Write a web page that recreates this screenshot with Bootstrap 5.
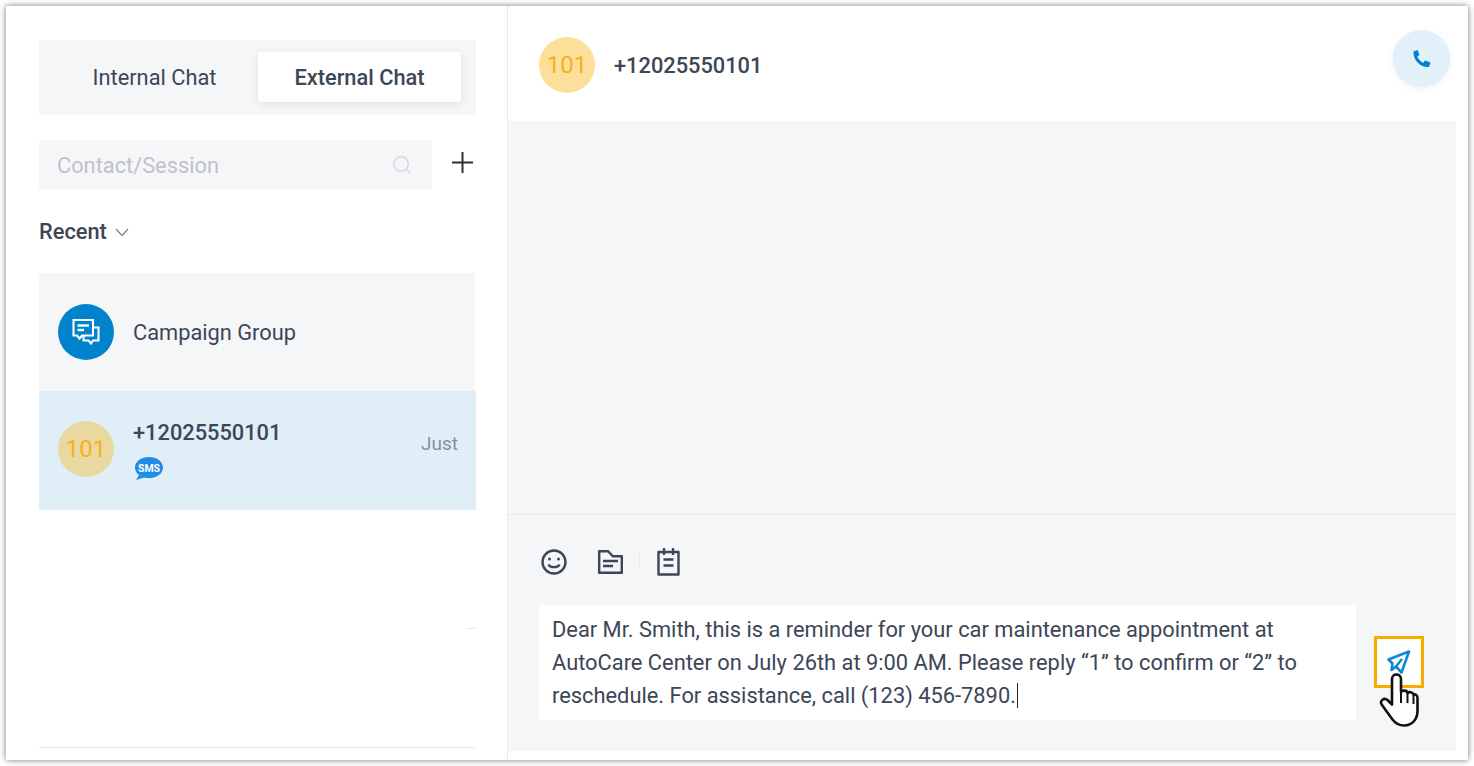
<!DOCTYPE html>
<html lang="en">
<head>
    <meta charset="UTF-8">
    <meta name="viewport" content="width=device-width, initial-scale=1.0">
    <link rel="stylesheet" href="https://cdn.jsdelivr.net/npm/bootstrap@5.3.0/dist/css/bootstrap.min.css">
    <title>External Chat</title>
    <style>
        html, body { height: 100%; }
        body { background: #fff; font-family: Roboto, sans-serif; color: #3c4657; overflow: hidden; padding: 6px 6px 6px 6px; }
        .app-window { height: 754px; width: 1462px; background: #fff; box-shadow: 0 0 6px rgba(0,0,0,.55); }
        .side-panel { width: 502px; flex: none; border-right: 1px solid #e6e9f2; padding: 34px 31px 0 33px; }
        .chat-switch { background: #f5f6f8; height: 75px; padding: 12px 15px 9px 12px; }
        .switch-item { width: 203px; height: 50px; font-size: 21.8px; line-height: 52px; text-align: center; border-radius: 3px; }
        .switch-off { padding-left: 4px; }
        .switch-on { background: #fff; font-weight: 500; box-shadow: 0 2px 8px rgba(60,70,87,.12); width: 203px; }
        .search-row { margin-top: 25px; height: 50px; }
        .search-box { width: 393px; height: 50px; background: #f5f6f8; border-radius: 3px; padding: 0 20px 0 18px; font-size: 21.8px; color: #bfc2c8; }
        .search-label { padding-top: 3px; }
        .plus-btn { margin-left: 20px; margin-top: -6px; }
        .recent-row { margin-top: 28px; height: 26px; font-size: 21.8px; font-weight: 500; line-height: 26px; gap: 8px; padding-top: 2px; }
        .conv-list { margin-top: 29px; width: 437px; }
        .conv-item { padding-left: 19px; gap: 19px; }
        .conv-one { height: 118px; background: #f5f6f8; width: 436px; }
        .conv-two { height: 119px; background: #e0eef8; padding-right: 18px; padding-bottom: 4px; }
        .round-avatar { width: 56px; height: 56px; border-radius: 50%; flex: none; }
        .avatar-blue { background: #0082cc; }
        .avatar-num { background: #e9d8a0; color: #f8b01d; font-size: 24px; }
        .avatar-head { background: #fcdf99; color: #f8b01d; font-size: 24px; }
        .conv-name { font-size: 21.8px; line-height: 26px; padding-top: 1px; }
        .conv-block { padding-top: 4px; }
        .conv-phone { font-size: 21.8px; line-height: 26px; font-weight: 500; }
        .conv-time { font-size: 19px; color: #8a8f98; margin-top: -8px; }
        .sms-ico { display: block; margin-top: 10px; margin-left: 1px; }
        .list-spacer { position: relative; width: 437px; height: 238px; border-bottom: 1px solid #e9eaee; }
        .tiny-rule { position: absolute; right: 0; top: 118px; width: 10px; height: 1px; background: #e6e9f2; }
        .chat-panel { width: 948px; flex: none; }
        .chat-head { height: 115px; padding: 2px 6px 0 31px; gap: 19px; }
        .head-phone { font-size: 21.8px; font-weight: 500; padding-top: 4px; }
        .call-btn { width: 57px; height: 57px; border-radius: 50%; background: #e2f0fa; box-shadow: 0 2px 6px rgba(60,70,87,.08); margin-top: -12px; }
        .msg-area { height: 394px; background: #f5f6f8; border-bottom: 1px solid #e6e9ee; }
        .compose-area { height: 236px; background: #f5f6f8; }
        .tool-row { padding: 33px 0 0 32px; height: 90px; }
        .tool-folder { margin-left: 28px; }
        .tool-sep { width: 1px; height: 19px; background: #e6e9ee; margin: 3px 15px 0 15px; }
        .compose-row { padding-left: 31px; position: relative; }
        .compose-text { width: 817px; height: 115px; background: #fff; padding: 8px 13px; font-size: 21.85px; line-height: 33px; }
        .caret-bar { border-left: 1px solid #222; margin-left: 1px; }
        .send-box { position: absolute; left: 866px; top: 31px; width: 50px; height: 52px; background: #fff; border: 3px solid #f9ab00; }
        .hand-ico { position: absolute; left: 871px; top: 68px; }
        .right-gutter { width: 12px; flex: none; }
    </style>
</head>
<body>
    <div class="app-window d-flex">
        <div class="side-panel">
            <div class="chat-switch d-flex justify-content-between">
                <div class="switch-item switch-off">Internal Chat</div>
                <div class="switch-item switch-on">External Chat</div>
            </div>
            <div class="search-row d-flex">
                <div class="search-box d-flex align-items-center justify-content-between">
                    <span class="search-label">Contact/Session</span>
                    <svg width="20" height="20" viewBox="0 0 20 20" fill="none" stroke="#d5d8de" stroke-width="1.6"><circle cx="9" cy="9" r="7.2"/><path d="M14.2 14.2L18 18"/></svg>
                </div>
                <div class="plus-btn d-flex align-items-center">
                    <svg width="21" height="21" viewBox="0 0 21 21" stroke="#2b2f36" stroke-width="2"><path d="M10.500 0v21M0 10.500h21"/></svg>
                </div>
            </div>
            <div class="recent-row d-flex align-items-center">
                <span>Recent</span>
                <svg width="14" height="9" viewBox="0 0 14 9" fill="none" stroke="#7d828b" stroke-width="1.2"><path d="M1 1l6 6.500L13 1"/></svg>
            </div>
            <div class="conv-list">
                <div class="conv-item conv-one d-flex align-items-center">
                    <div class="round-avatar avatar-blue d-flex align-items-center justify-content-center">
                        <svg width="28" height="28" viewBox="0 0 28 28" fill="none" stroke="#fff" stroke-width="2.100"><path d="M1.500 2h19.500v15.500H10l-2.500 3-2.500-3H1.500z"/><path d="M5.500 7.500h11.500" stroke-width="2.400"/><path d="M5.500 12h6.500" stroke-width="2.400"/><path d="M21 9.500h5.500v13H21l-2 3-2.500-3h-5v-5"/></svg>
                    </div>
                    <div class="conv-name">Campaign Group</div>
                </div>
                <div class="conv-item conv-two d-flex align-items-center">
                    <div class="round-avatar avatar-num d-flex align-items-center justify-content-center">101</div>
                    <div class="conv-block flex-grow-1">
                        <div class="conv-phone">+12025550101</div>
                        <svg class="sms-ico" width="30" height="25" viewBox="0 0 30 25"><path d="M15 1C7 1 1 5.500 1 11.500c0 3 1.500 5.500 4 7.500L2 24l8-2.500c1.500.4 3.200.6 5 .6 8 0 14-4.800 14-10.600S23 1 15 1z" fill="#1f8ce6"/><text x="15" y="15.500" text-anchor="middle" font-family="Roboto, sans-serif" font-size="10.500" font-weight="700" fill="#fff">SMS</text></svg>
                    </div>
                    <div class="conv-time">Just</div>
                </div>
                <div class="list-spacer"><div class="tiny-rule"></div></div>
            </div>
        </div>
        <div class="chat-panel">
            <div class="chat-head d-flex align-items-center">
                <div class="round-avatar avatar-head d-flex align-items-center justify-content-center">101</div>
                <div class="head-phone flex-grow-1">+12025550101</div>
                <div class="call-btn d-flex align-items-center justify-content-center">
                    <svg width="20" height="20" viewBox="0 0 20 20"><path d="M1.500 2.500L5.500 1l2 5-2.200 1.500c1 2.800 3.400 5.200 6.200 6.200L13 11.500l5.500 2-1.500 4.500C8.500 19 1 11 1.500 2.500z" fill="#0082cc"/></svg>
                </div>
            </div>
            <div class="msg-area"></div>
            <div class="compose-area">
                <div class="tool-row d-flex align-items-start">
                    <svg width="28" height="28" viewBox="0 0 28 28" fill="none" stroke="#3c4657" stroke-width="2.400"><circle cx="14" cy="14" r="11.500"/><circle cx="9.500" cy="11" r="1.500" fill="#3c4657" stroke="none"/><circle cx="18.500" cy="11" r="1.500" fill="#3c4657" stroke="none"/><path d="M8.500 16.500c1.500 3.500 9.500 3.500 11 0"/></svg>
                    <svg class="tool-folder" width="28" height="28" viewBox="0 0 28 28" fill="none" stroke="#3c4657" stroke-width="2.400" stroke-linejoin="round"><path d="M3.200 3.200h9l4.500 5h9.100v16.600H3.200z"/><path d="M7 13h15M7 18h10"/></svg>
                    <div class="tool-sep"></div>
                    <svg width="26" height="28" viewBox="0 0 26 28" fill="none" stroke="#3c4657" stroke-width="2.400" stroke-linejoin="round"><path d="M3.500 4h20v22.500h-20z"/><path d="M9 0v7M18 0v7M8.500 11.500h10M8.500 17.500h10"/></svg>
                </div>
                <div class="compose-row">
                    <div class="compose-text">Dear Mr. Smith, this is a reminder for your car maintenance appointment at AutoCare Center on July 26th at 9:00 AM. Please reply “1” to confirm or “2” to reschedule. For assistance, call (123) 456-7890.<span class="caret-bar"></span></div>
                    <div class="send-box d-flex align-items-center justify-content-center">
                        <svg width="26" height="26" viewBox="0 0 26 26" fill="none" stroke="#0a8ad6" stroke-width="2.600" stroke-linejoin="round"><path d="M23 2.500L2.500 10.500l4 4-1 6.500 4.500-3.500 5.500 6z"/><path d="M10 17.500L16 10"/></svg>
                    </div>
                    <svg class="hand-ico" width="42" height="54" viewBox="0 0 42 54"><path d="M13 6c0-6 9-6 9 0v13c1.500-2 6-2 6.500 1 1.500-1.500 5.500-1 6 1.500 2-.5 4 .5 4 3.500v13c0 9-6 14.500-13.500 14.500-5.500 0-8.500-2-11.500-6L3 32c-3-4 2-8 5.500-5l4.500 4.500z" fill="#fff" stroke="#111" stroke-width="2.600" stroke-linejoin="round"/><path d="M22 19v11M28.500 20v10M34.500 22v9" stroke="#111" stroke-width="2"/></svg>
                </div>
            </div>
        </div>
        <div class="right-gutter"></div>
    </div>
</body>
</html>
